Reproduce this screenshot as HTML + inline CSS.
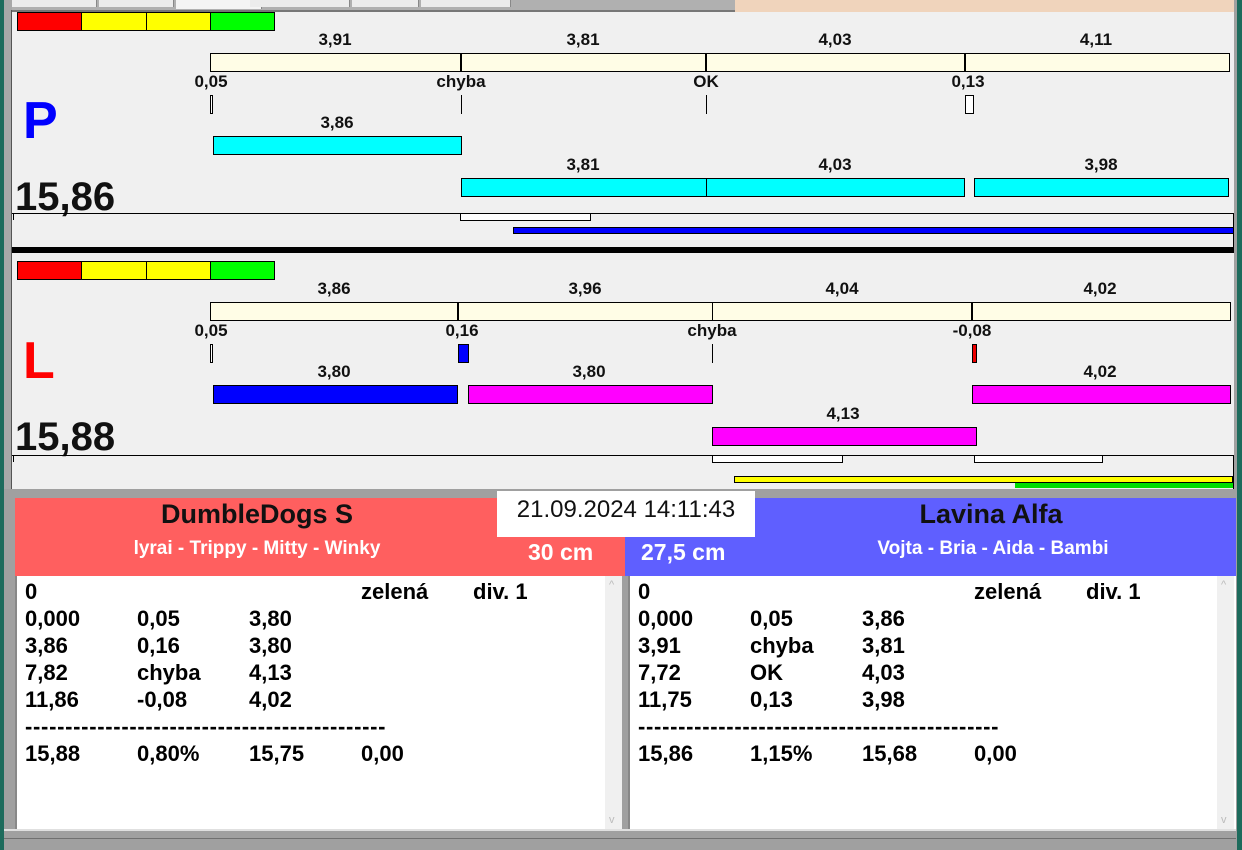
<!DOCTYPE html>
<html><head><meta charset="utf-8"><style>
*{margin:0;padding:0;box-sizing:border-box}
body{width:1242px;height:850px;overflow:hidden;background:#f0f0f0;position:relative;font-family:"Liberation Sans",Arial,sans-serif}
div{position:absolute}
.b{border:1px solid #000}
.l{font-weight:bold;font-size:17px;color:#111;transform:translateX(-50%);white-space:nowrap;line-height:18px}
.cr{background:#fffde6}
.cy{background:#00ffff}
.mg{background:#ff00ff}
.bl{background:#0000ff}
.t{font-weight:bold;font-size:22px;color:#000;line-height:27px;white-space:pre}
</style></head><body>
<!-- frame -->
<div style="left:0;top:0;width:4px;height:850px;background:#1d6b5c"></div>
<div style="left:4px;top:0;width:8px;height:850px;background:#a8a8a8"></div>
<div style="left:11px;top:10px;width:1px;height:480px;background:#555"></div>
<div style="left:1236px;top:0;width:6px;height:850px;background:#1d6b5c"></div>
<div style="left:1234px;top:0;width:3px;height:850px;background:#a0a0a0"></div>
<div style="left:12px;top:0;width:723px;height:10px;background:#b0b0b0"></div>
<div style="left:12px;top:0;width:85px;height:7px;background:#ececec;border-right:1px solid #888"></div>
<div style="left:99px;top:0;width:75px;height:7px;background:#ececec;border-right:1px solid #888"></div>
<div style="left:176px;top:0;width:86px;height:9px;background:#f4f4f4;border-right:1px solid #888"></div>
<div style="left:250px;top:0;width:100px;height:7px;background:#ececec;border-right:1px solid #888"></div>
<div style="left:352px;top:0;width:67px;height:7px;background:#ececec;border-right:1px solid #888"></div>
<div style="left:421px;top:0;width:90px;height:7px;background:#ececec;border-right:1px solid #888"></div>
<div style="left:735px;top:0;width:499px;height:12px;background:#f0d4bc"></div>
<div style="left:12px;top:10px;width:723px;height:2px;background:#777"></div>

<!-- P section -->
<div class="b" style="left:17px;top:12px;width:65px;height:19px;background:#f00"></div>
<div class="b" style="left:81px;top:12px;width:66px;height:19px;background:#ff0"></div>
<div class="b" style="left:146px;top:12px;width:65px;height:19px;background:#ff0"></div>
<div class="b" style="left:210px;top:12px;width:65px;height:19px;background:#0f0"></div>

<div class="l" style="left:335px;top:31px">3,91</div>
<div class="l" style="left:583px;top:31px">3,81</div>
<div class="l" style="left:835px;top:31px">4,03</div>
<div class="l" style="left:1096px;top:31px">4,11</div>
<div class="b cr" style="left:210px;top:53px;width:1020px;height:19px"></div>
<div style="left:460px;top:53px;width:2px;height:19px;background:#000"></div>
<div style="left:705px;top:53px;width:2px;height:19px;background:#000"></div>
<div style="left:964px;top:53px;width:2px;height:19px;background:#000"></div>
<div class="l" style="left:211px;top:73px">0,05</div>
<div class="l" style="left:461px;top:73px">chyba</div>
<div class="l" style="left:706px;top:73px">OK</div>
<div class="l" style="left:968px;top:73px">0,13</div>
<div class="b" style="left:210px;top:95px;width:3px;height:19px;background:#fff"></div>
<div style="left:461px;top:95px;width:1px;height:19px;background:#000"></div>
<div style="left:706px;top:95px;width:1px;height:19px;background:#000"></div>
<div class="b" style="left:965px;top:95px;width:9px;height:19px;background:#fff"></div>
<div style="left:23px;top:91px;font-size:52px;font-weight:bold;color:#0000ff;line-height:60px">P</div>
<div class="l" style="left:337px;top:114px">3,86</div>
<div class="b cy" style="left:213px;top:136px;width:249px;height:19px"></div>
<div class="l" style="left:583px;top:156px">3,81</div>
<div class="l" style="left:835px;top:156px">4,03</div>
<div class="l" style="left:1101px;top:156px">3,98</div>
<div class="b cy" style="left:461px;top:178px;width:246px;height:19px"></div>
<div class="b cy" style="left:706px;top:178px;width:259px;height:19px"></div>
<div class="b cy" style="left:974px;top:178px;width:255px;height:19px"></div>
<div style="left:15px;top:174px;font-size:40px;font-weight:bold;color:#111;line-height:46px">15,86</div>
<div style="left:12px;top:213px;width:1222px;height:1px;background:#000"></div>
<div style="left:1233px;top:213px;width:1px;height:34px;background:#000"></div>
<div style="left:13px;top:214px;width:1px;height:6px;background:#000"></div>
<div class="b" style="left:460px;top:213px;width:131px;height:8px;background:#fff"></div>
<div class="b bl" style="left:513px;top:227px;width:721px;height:7px"></div>
<div style="left:12px;top:247px;width:1222px;height:6px;background:#000"></div>

<!-- L section -->
<div class="b" style="left:17px;top:261px;width:65px;height:19px;background:#f00"></div>
<div class="b" style="left:81px;top:261px;width:66px;height:19px;background:#ff0"></div>
<div class="b" style="left:146px;top:261px;width:65px;height:19px;background:#ff0"></div>
<div class="b" style="left:210px;top:261px;width:65px;height:19px;background:#0f0"></div>
<div class="l" style="left:334px;top:280px">3,86</div>
<div class="l" style="left:585px;top:280px">3,96</div>
<div class="l" style="left:842px;top:280px">4,04</div>
<div class="l" style="left:1100px;top:280px">4,02</div>
<div class="b cr" style="left:210px;top:302px;width:1021px;height:19px"></div>
<div style="left:457px;top:302px;width:2px;height:19px;background:#000"></div>
<div style="left:712px;top:302px;width:1px;height:19px;background:#000"></div>
<div style="left:971px;top:302px;width:2px;height:19px;background:#000"></div>
<div class="l" style="left:211px;top:322px">0,05</div>
<div class="l" style="left:462px;top:322px">0,16</div>
<div class="l" style="left:712px;top:322px">chyba</div>
<div class="l" style="left:972px;top:322px">-0,08</div>
<div class="b" style="left:210px;top:344px;width:3px;height:19px;background:#fff"></div>
<div class="b bl" style="left:458px;top:344px;width:11px;height:19px"></div>
<div style="left:712px;top:344px;width:1px;height:19px;background:#000"></div>
<div class="b" style="left:972px;top:344px;width:5px;height:19px;background:#e00"></div>
<div style="left:23px;top:331px;font-size:52px;font-weight:bold;color:#ff0000;line-height:60px">L</div>
<div class="l" style="left:334px;top:363px">3,80</div>
<div class="l" style="left:589px;top:363px">3,80</div>
<div class="l" style="left:1100px;top:363px">4,02</div>
<div class="b bl" style="left:213px;top:385px;width:245px;height:19px"></div>
<div class="b mg" style="left:468px;top:385px;width:245px;height:19px"></div>
<div class="b mg" style="left:972px;top:385px;width:259px;height:19px"></div>
<div class="l" style="left:843px;top:405px">4,13</div>
<div class="b mg" style="left:712px;top:427px;width:265px;height:19px"></div>
<div style="left:15px;top:414px;font-size:40px;font-weight:bold;color:#111;line-height:46px">15,88</div>
<div style="left:12px;top:455px;width:1222px;height:1px;background:#000"></div>
<div style="left:1233px;top:455px;width:1px;height:34px;background:#000"></div>
<div style="left:13px;top:456px;width:1px;height:6px;background:#000"></div>
<div class="b" style="left:712px;top:455px;width:131px;height:8px;background:#fff"></div>
<div class="b" style="left:974px;top:455px;width:129px;height:8px;background:#fff"></div>
<div class="b" style="left:734px;top:476px;width:499px;height:7px;background:#ff0"></div>
<div style="left:1015px;top:482px;width:218px;height:6px;background:#00dd00;border-top:1px solid #000"></div>

<!-- bottom -->
<div style="left:4px;top:489px;width:1232px;height:361px;background:#a0a0a0"></div>
<div style="left:15px;top:498px;width:610px;height:78px;background:#ff5f5f"></div>
<div style="left:625px;top:498px;width:611px;height:78px;background:#5f5fff"></div>
<div style="left:137px;top:498px;width:240px;font-size:27px;font-weight:bold;text-align:center;line-height:32px;color:#111">DumbleDogs S</div>
<div style="left:97px;top:538px;width:320px;font-size:19px;font-weight:bold;text-align:center;color:#fff;line-height:22px">lyrai - Trippy - Mitty - Winky</div>
<div style="left:528px;top:538px;font-size:23px;font-weight:bold;color:#fff;line-height:28px">30 cm</div>
<div style="left:641px;top:538px;font-size:23px;font-weight:bold;color:#fff;line-height:28px">27,5 cm</div>
<div style="left:841px;top:498px;width:300px;font-size:27px;font-weight:bold;text-align:center;line-height:32px;color:#111">Lavina Alfa</div>
<div style="left:833px;top:538px;width:320px;font-size:19px;font-weight:bold;text-align:center;color:#fff;line-height:22px">Vojta - Bria - Aida - Bambi</div>
<div style="left:497px;top:491px;width:258px;height:46px;background:#fff;font-size:24px;text-align:center;line-height:38px;color:#111">21.09.2024 14:11:43</div>

<div style="left:15px;top:576px;width:607px;height:253px;background:#fff;border-left:2px solid #888"></div>
<div style="left:605px;top:576px;width:17px;height:253px;background:#f0f0f0;color:#bbb;font-size:11px;text-align:center"><span style="position:absolute;top:3px;left:4px">^</span><span style="position:absolute;bottom:3px;left:4px">v</span></div>
<div style="left:628px;top:576px;width:608px;height:253px;background:#fff;border-left:2px solid #888"></div>
<div style="left:1217px;top:576px;width:17px;height:253px;background:#f0f0f0;color:#bbb;font-size:11px;text-align:center"><span style="position:absolute;top:3px;left:4px">^</span><span style="position:absolute;bottom:3px;left:4px">v</span></div>
<div style="left:4px;top:829px;width:1232px;height:2px;background:#e0e0e0"></div>
<div style="left:4px;top:838px;width:1232px;height:1px;background:#707070"></div>

<div class="t" style="left:25px;top:578px">0</div><div class="t" style="left:361px;top:578px">zelená</div><div class="t" style="left:473px;top:578px">div. 1</div>
<div class="t" style="left:25px;top:605px">0,000</div><div class="t" style="left:137px;top:605px">0,05</div><div class="t" style="left:249px;top:605px">3,80</div>
<div class="t" style="left:25px;top:632px">3,86</div><div class="t" style="left:137px;top:632px">0,16</div><div class="t" style="left:249px;top:632px">3,80</div>
<div class="t" style="left:25px;top:659px">7,82</div><div class="t" style="left:137px;top:659px">chyba</div><div class="t" style="left:249px;top:659px">4,13</div>
<div class="t" style="left:25px;top:686px">11,86</div><div class="t" style="left:137px;top:686px">-0,08</div><div class="t" style="left:249px;top:686px">4,02</div>
<div class="t" style="left:25px;top:713px;letter-spacing:0.7px">---------------------------------------------</div>
<div class="t" style="left:25px;top:740px">15,88</div><div class="t" style="left:137px;top:740px">0,80%</div><div class="t" style="left:249px;top:740px">15,75</div><div class="t" style="left:361px;top:740px">0,00</div>

<div class="t" style="left:638px;top:578px">0</div><div class="t" style="left:974px;top:578px">zelená</div><div class="t" style="left:1086px;top:578px">div. 1</div>
<div class="t" style="left:638px;top:605px">0,000</div><div class="t" style="left:750px;top:605px">0,05</div><div class="t" style="left:862px;top:605px">3,86</div>
<div class="t" style="left:638px;top:632px">3,91</div><div class="t" style="left:750px;top:632px">chyba</div><div class="t" style="left:862px;top:632px">3,81</div>
<div class="t" style="left:638px;top:659px">7,72</div><div class="t" style="left:750px;top:659px">OK</div><div class="t" style="left:862px;top:659px">4,03</div>
<div class="t" style="left:638px;top:686px">11,75</div><div class="t" style="left:750px;top:686px">0,13</div><div class="t" style="left:862px;top:686px">3,98</div>
<div class="t" style="left:638px;top:713px;letter-spacing:0.7px">---------------------------------------------</div>
<div class="t" style="left:638px;top:740px">15,86</div><div class="t" style="left:750px;top:740px">1,15%</div><div class="t" style="left:862px;top:740px">15,68</div><div class="t" style="left:974px;top:740px">0,00</div>
</body></html>
